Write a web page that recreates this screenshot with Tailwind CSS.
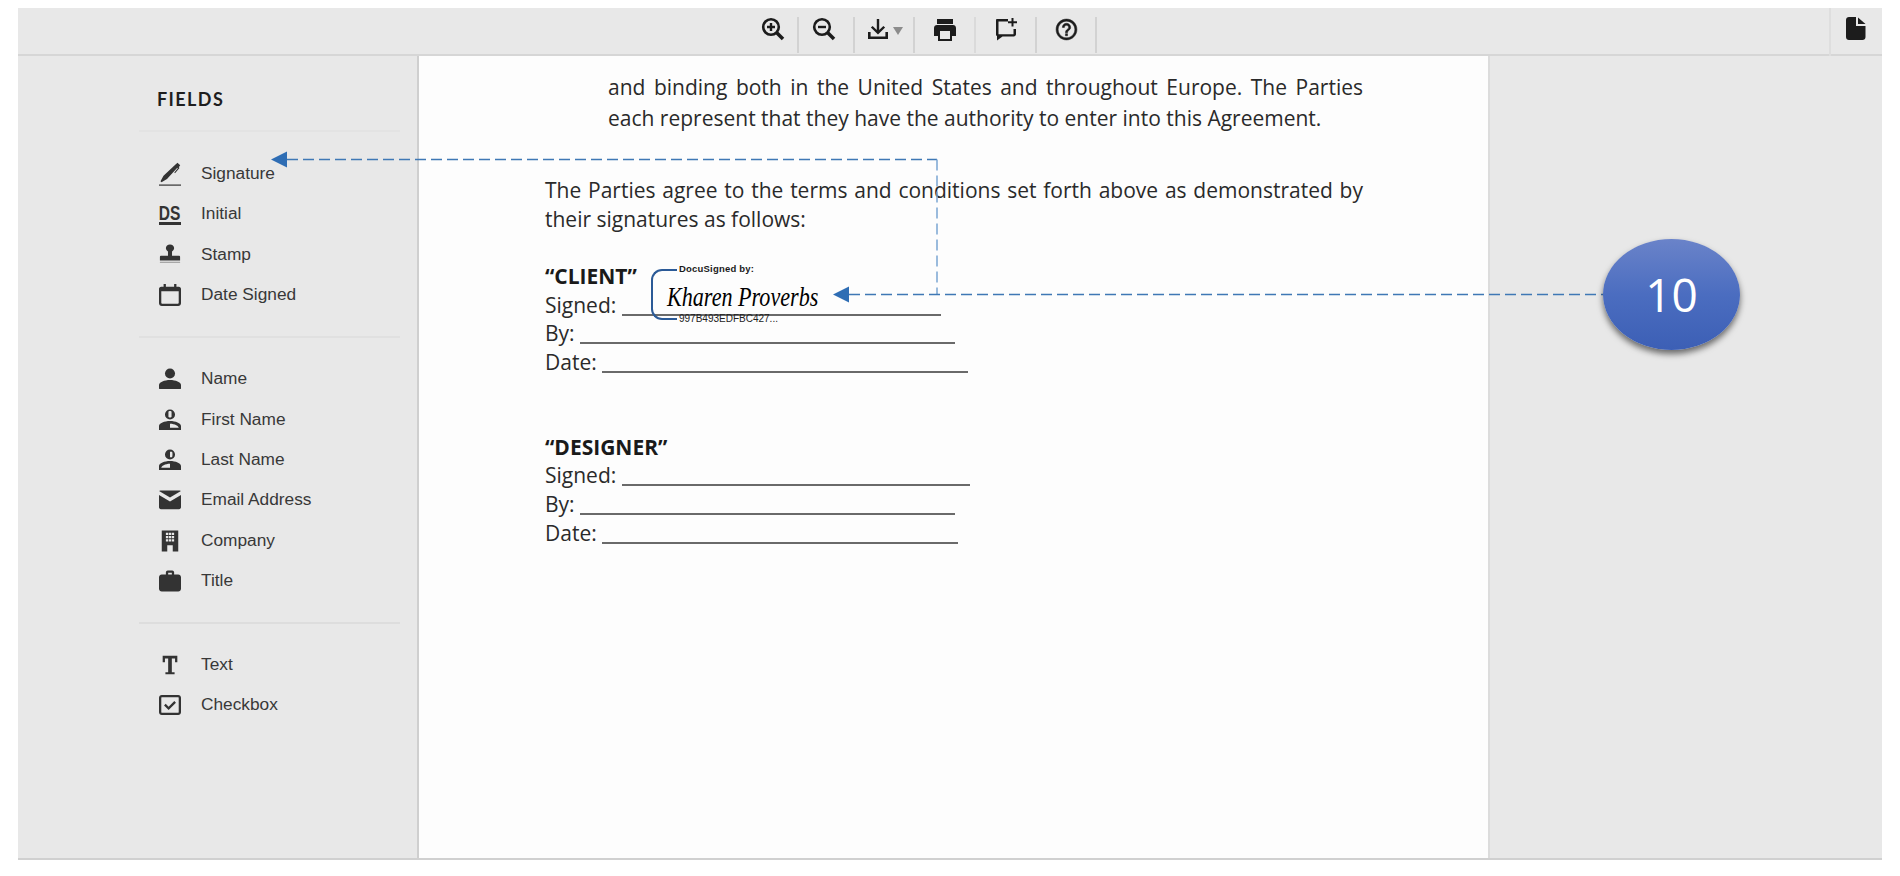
<!DOCTYPE html>
<html lang="en">
<head>
<meta charset="utf-8">
<title>Fields</title>
<script src="https://cdn.jsdelivr.net/npm/@tailwindcss/browser@4"></script>
</head>
<body class="bg-white w-[1900px] h-[876px] overflow-hidden relative font-['Liberation_Sans',sans-serif]">
<div class="mt-2 ml-[18px] w-[1864px] h-[852px] flex flex-col border-b-2 border-[#d0d0d0]">

  <!-- toolbar -->
  <div class="h-[48px] shrink-0 bg-[#e8e8e8] border-b-2 border-[#d6d6d6] flex text-[#1c1c1c] pl-[721px]">
    <div class="w-[60px] h-[36px] mt-[9px] border-r-2 border-[#d2d2d2] flex items-start justify-center pl-[10px]">
      <svg class="w-[24px] h-[24px]" viewBox="0 0 24 24" fill="none" stroke="currentColor"><circle cx="10" cy="10" r="7.800" stroke-width="2.600"/><path d="M15.500 15.500 22 22" stroke-width="3.600"/><path d="M10 6v8M6 10h8" stroke-width="2.400"/></svg>
    </div>
    <div class="w-[56px] h-[36px] mt-[9px] border-r-2 border-[#d2d2d2] flex items-start justify-center pr-[4px]">
      <svg class="w-[24px] h-[24px]" viewBox="0 0 24 24" fill="none" stroke="currentColor"><circle cx="10" cy="10" r="7.800" stroke-width="2.600"/><path d="M15.500 15.500 22 22" stroke-width="3.600"/><path d="M6 10h8" stroke-width="2.400"/></svg>
    </div>
    <div class="w-[60px] h-[36px] mt-[9px] border-r-2 border-[#d2d2d2] flex items-start pl-[11px] gap-[3px]">
      <svg class="w-[24px] h-[26px]" viewBox="0 0 24 26" fill="currentColor"><path d="M10.800 2h2.400v11l4.200-4.100 1.700 1.600-7.100 7-7.100-7 1.700-1.600 4.200 4.100z"/><path d="M2 15h2.600v4.500h14.800V15H22v7H2z"/></svg>
      <div class="mt-[10px] w-0 h-0 border-l-[5px] border-r-[5px] border-t-[8px] border-l-transparent border-r-transparent border-t-[#8c8c8c]"></div>
    </div>
    <div class="w-[61px] h-[36px] mt-[9px] border-r-2 border-[#dadada] flex items-start justify-center">
      <svg class="w-[24px] h-[26px]" viewBox="0 0 24 26" fill="currentColor"><path d="M4 2h16v5H4z"/><path fill-rule="evenodd" d="M4 8h16c1.700 0 3 1.300 3 3v8h-4v5H5v-5H1v-8c0-1.700 1.300-3 3-3zm3 6v8h10v-8z"/></svg>
    </div>
    <div class="w-[61px] h-[36px] mt-[9px] border-r-2 border-[#d2d2d2] flex items-start justify-center">
      <svg class="w-[24px] h-[24px]" viewBox="0 0 24 24" fill="currentColor"><path d="M3 2h11v2.400H4.500v12.800h15V12H22v5.200c0 1.200-1 2.200-2.200 2.200H8.500L3 23.500V19c-1-.3-1-.9-1-1.800V3.500C2 2.600 2.200 2 3 2z"/><path d="M17.500 1h2v3.200H23v2h-3.500v3.300h-2V6.200H14v-2h3.500z"/></svg>
    </div>
    <div class="w-[60px] h-[36px] mt-[9px] border-r-2 border-[#d2d2d2] flex items-start justify-center">
      <svg class="w-[25px] h-[25px]" viewBox="0 0 24 24" fill="currentColor" stroke="currentColor" stroke-width=".5"><path d="M11 18h2v-2h-2v2zm1-16C6.480 2 2 6.480 2 12s4.480 10 10 10 10-4.480 10-10S17.520 2 12 2zm0 18c-4.410 0-8-3.590-8-8s3.590-8 8-8 8 3.590 8 8-3.590 8-8 8zm0-14c-2.210 0-4 1.790-4 4h2c0-1.100.9-2 2-2s2 .9 2 2c0 2-3 1.750-3 5h2c0-2.250 3-2.500 3-5 0-2.210-1.790-4-4-4z"/></svg>
    </div>
    <div class="ml-auto w-[53px] h-[48px] -mb-[2px] border-l-2 border-[#dedede] flex items-start pl-[15px] pt-[9px]">
      <svg class="w-[20px] h-[23px]" viewBox="0 0 20 23" fill="#1c1c1c"><path d="M3 0h7v9h9.500v11c0 1.700-1.300 3-3 3H3c-1.700 0-3-1.300-3-3V3c0-1.700 1.300-3 3-3z"/><path d="M12 .5 19.500 7H12z"/></svg>
    </div>
  </div>

  <div class="flex-1 flex min-h-0">
    <!-- fields sidebar -->
    <aside class="w-[401px] shrink-0 bg-[#e8e8e8] border-r-2 border-[#cfcfcf] pl-[121px] pr-[17px] text-[#383838] text-[17.3px]">
      <div class="h-[76px] flex items-center pl-[18px] pt-[12px] border-b-2 border-[#e3e3e3] font-['Lato',sans-serif] font-bold text-[18px] tracking-[1.4px] text-[#1e1e1e]">FIELDS</div>

      <div class="pt-[21px] pb-[21px] border-b-2 border-[#e0e0e0]">
        <div class="h-[40.4px] flex items-center pl-[20px] pt-[1px] gap-[20px]">
          <svg class="w-[22px] h-[24px] shrink-0" viewBox="0 0 22 24" fill="#333"><path d="M16.500 2.500 18.500 .8l2.700 2.500-1.400 2 .7.700-4.500 5.200-.7-.6 3.500-4.300-.5-.5L8 17 2.500 20.300 1.500 19.300 4.500 13.800z"/><path d="M0 22.500h22v1.200H0z"/></svg>
          <span>Signature</span>
        </div>
        <div class="h-[40.4px] flex items-center pl-[20px] pt-[1px] gap-[20px]">
          <span class="w-[22px] shrink-0 border-b-[3px] border-[#333] text-center font-bold text-[#333] text-[21px] leading-[19px] overflow-visible"><span class="inline-block scale-x-[0.74] -mx-[4px]">DS</span></span>
          <span>Initial</span>
        </div>
        <div class="h-[40.4px] flex items-center pl-[20px] pt-[1px] gap-[20px]">
          <svg class="w-[22px] h-[24px] shrink-0" viewBox="0 0 24 24" fill="#333"><path d="M12 1.500c2.600 0 4.500 1.800 4.500 4 0 1.700-1 3-2.300 3.700V14H22c.6 0 1 .4 1 1v4H1v-4c0-.6.4-1 1-1h7.800V9.200C8.500 8.500 7.500 7.200 7.500 5.500c0-2.200 1.900-4 4.500-4z"/><path d="M1 20.500h22v1H1z" opacity=".5"/></svg>
          <span>Stamp</span>
        </div>
        <div class="h-[40.4px] flex items-center pl-[20px] pt-[1px] gap-[20px]">
          <svg class="w-[22px] h-[24px] shrink-0" viewBox="0 0 24 26" fill="#333"><path fill-rule="evenodd" d="M5 1h2.500v3h9V1H19v3h2.500C23 4 24 5 24 6.500V22c0 1.700-1.300 3-3 3H3c-1.700 0-3-1.300-3-3V6.500C0 5 1 4 2.500 4H5zM2.500 9v12.500c0 .6.400 1 1 1h17c.6 0 1-.4 1-1V9z"/></svg>
          <span>Date Signed</span>
        </div>
      </div>

      <div class="pt-[21px] pb-[21px] border-b-2 border-[#dddddd]">
        <div class="h-[40.4px] flex items-center pl-[20px] pt-[1px] gap-[20px]">
          <svg class="w-[22px] h-[22px] shrink-0" viewBox="0 0 24 24" fill="#333"><circle cx="12" cy="6" r="5.500"/><path d="M0 22v-3.500c0-3 6-5.500 12-5.500s12 2.500 12 5.500V22c0 .6-.4 1-1 1H1c-.6 0-1-.4-1-1z"/></svg>
          <span>Name</span>
        </div>
        <div class="h-[40.4px] flex items-center pl-[20px] pt-[1px] gap-[20px]">
          <svg class="w-[22px] h-[22px] shrink-0" viewBox="0 0 24 24" fill="#333"><path fill-rule="evenodd" d="M12 .500a5.500 5.500 0 1 1 0 11 5.500 5.500 0 0 1 0-11zM10.300 3v5.500c0 1 3.400 1 3.400 0V3c0-1-3.400-1-3.400 0z"/><path fill-rule="evenodd" d="M0 23v-4.500c0-3 6-5.500 12-5.500s12 2.500 12 5.500V23zm12-7v4.500h9.500c0-2-4-4.500-9.500-4.500z"/></svg>
          <span>First Name</span>
        </div>
        <div class="h-[40.4px] flex items-center pl-[20px] pt-[1px] gap-[20px]">
          <svg class="w-[22px] h-[22px] shrink-0" viewBox="0 0 24 24" fill="#333"><path fill-rule="evenodd" d="M12 .500a5.500 5.500 0 1 1 0 11 5.500 5.500 0 0 1 0-11zM12 3v6h2c1 0 1-6 0-6z"/><path fill-rule="evenodd" d="M0 23v-4.500c0-3 6-5.500 12-5.500s12 2.500 12 5.500V23zm12-7c-5.500 0-9.500 2.500-9.500 4.500H12z"/></svg>
          <span>Last Name</span>
        </div>
        <div class="h-[40.4px] flex items-center pl-[20px] pt-[1px] gap-[20px]">
          <svg class="w-[22px] h-[22px] shrink-0" viewBox="0 0 24 24" fill="#333"><path d="M1.500 1.500h21c.6 0 1.100.3 1.400.8L12 9.300.1 2.300c.3-.5.8-.8 1.400-.8z"/><path d="M0 6.500l12 7 12-7V20c0 1.100-.9 2-2 2H2c-1.100 0-2-.9-2-2z"/></svg>
          <span>Email Address</span>
        </div>
        <div class="h-[40.4px] flex items-center pl-[20px] pt-[1px] gap-[20px]">
          <svg class="w-[22px] h-[22px] shrink-0" viewBox="0 0 24 24" fill="#333"><path fill-rule="evenodd" d="M3 .500h18v23h-6v-7H9v7H3zM7.500 3v2.500H10V3zm3.200 0v2.500h2.600V3zM14 3v2.500h2.500V3zM7.500 6.500V9H10V6.500zm3.200 0V9h2.600V6.500zm3.300 0V9h2.500V6.500zM7.500 10v2.500H10V10zm3.200 0v2.500h2.600V10zm3.300 0v2.500h2.500V10z"/></svg>
          <span>Company</span>
        </div>
        <div class="h-[40.4px] flex items-center pl-[20px] pt-[1px] gap-[20px]">
          <svg class="w-[22px] h-[22px] shrink-0" viewBox="0 0 24 24" fill="#333"><path fill-rule="evenodd" d="M7.500 5V2.500C7.500 1.500 8.500.500 9.500.500h5c1 0 2 1 2 2V5H21c1.700 0 3 1.300 3 3v12.500c0 1.700-1.300 3-3 3H3c-1.700 0-3-1.300-3-3V8c0-1.700 1.300-3 3-3zM10 3v2h4V3z"/></svg>
          <span>Title</span>
        </div>
      </div>

      <div class="pt-[20px]">
        <div class="h-[40.4px] flex items-center pl-[20px] pt-[1px] gap-[20px]">
          <svg class="w-[22px] h-[22px] shrink-0" viewBox="0 0 24 24" fill="#333"><path d="M4 2h16v7h-2.500V5H14v15h3v2H7v-2h3V5H6.500v4H4z"/></svg>
          <span>Text</span>
        </div>
        <div class="h-[40px] flex items-center pl-[20px] pt-[1px] gap-[20px]">
          <svg class="w-[22px] h-[22px] shrink-0" viewBox="0 0 24 24" fill="#333"><path fill-rule="evenodd" d="M3 1h18c1.700 0 3 1.300 3 3v16c0 1.700-1.300 3-3 3H3c-1.700 0-3-1.300-3-3V4c0-1.700 1.300-3 3-3zm0 2.500c-.3 0-.5.200-.5.500v16c0 .3.200.5.500.5h18c.3 0 .5-.2.500-.5V4c0-.3-.2-.5-.5-.5z"/><path d="M10.500 17.500 5.500 12.500l1.800-1.800 3.200 3.200 6.200-6.200 1.800 1.800z"/></svg>
          <span>Checkbox</span>
        </div>
      </div>
    </aside>

    <!-- document page -->
    <main class="w-[1071px] shrink-0 bg-[#fdfdfd] border-r-2 border-[#dcdcdc] pl-[126px] pr-[125px] pt-[16px] font-['Open_Sans',sans-serif] text-[21px] text-[#2a2a2a]">
      <p class="ml-[63px] leading-[31px] text-justify">and binding both in the United States and throughout Europe. The Parties each represent that they have the authority to enter into this Agreement.</p>
      <p class="mt-[42px] leading-[29px] text-justify">The Parties agree to the terms and conditions set forth above as demonstrated by their signatures as follows:</p>

      <div class="mt-[28px] leading-[28.7px]">
        <p class="font-bold text-[#1a1a1a]">“CLIENT”</p>
        <p class="h-[28.7px]">Signed: <span class="inline-block w-[319px] h-[18px] align-[-3px] border-b-2 border-[#6a6a6a]"></span></p>
        <p class="h-[28.7px]">By: <span class="inline-block w-[375px] h-[18px] align-[-3px] border-b-2 border-[#6a6a6a]"></span></p>
        <p class="h-[28.7px]">Date: <span class="inline-block w-[366px] h-[18px] align-[-3px] border-b-2 border-[#6a6a6a]"></span></p>
      </div>

      <div class="mt-[56px] leading-[28.7px]">
        <p class="font-bold text-[#1a1a1a]">“DESIGNER”</p>
        <p class="h-[28.7px]">Signed: <span class="inline-block w-[348px] h-[18px] align-[-3px] border-b-2 border-[#6a6a6a]"></span></p>
        <p class="h-[28.7px]">By: <span class="inline-block w-[375px] h-[18px] align-[-3px] border-b-2 border-[#6a6a6a]"></span></p>
        <p class="h-[28.7px]">Date: <span class="inline-block w-[356px] h-[18px] align-[-3px] border-b-2 border-[#6a6a6a]"></span></p>
      </div>
    </main>

    <div class="flex-1 bg-[#e8e8e8]"></div>
  </div>
</div>

<!-- DocuSign stamp over the signed line -->
<div class="absolute left-[651px] top-[269px] w-[26px] h-[51px] border-l-2 border-t-2 border-b-2 border-[#2b5a97] rounded-l-[11px]"></div>
<span class="absolute left-[679px] top-[263px] text-[9.5px] leading-[12px] font-bold text-[#1a1a1a] tracking-[0.2px]">DocuSigned by:</span>
<span class="absolute left-[667px] top-[281px] text-[28px] leading-[32px] italic text-black font-['Liberation_Serif',serif] whitespace-nowrap origin-left scale-x-[0.79]">Kharen Proverbs</span>
<span class="absolute left-[679px] top-[313px] text-[10px] leading-[12px] text-[#222]">997B493EDFBC427...</span>

<!-- callout arrows -->
<svg class="absolute left-0 top-0 w-[1900px] h-[876px] pointer-events-none" viewBox="0 0 1900 876" fill="none">
  <path d="M287 159.500H937" stroke="#3f78b5" stroke-width="1.500" stroke-dasharray="11 5"/>
  <path d="M937 159.500V294" stroke="#7aa5d2" stroke-width="1.500" stroke-dasharray="11 5"/>
  <path d="M849 294.500H1604" stroke="#3f78b5" stroke-width="1.500" stroke-dasharray="11 5"/>
  <path d="M271 159.500 287 151.500V167.500Z" fill="#2e6db4"/>
  <path d="M833 294.500 849 286.500V302.500Z" fill="#2e6db4"/>
</svg>

<!-- step badge -->
<div class="absolute left-[1603px] top-[239px] w-[137px] h-[111px] rounded-[50%] bg-gradient-to-b from-[#6a83c9] via-[#4b6dc0] to-[#3c5fb5] shadow-[0_4px_6px_rgba(0,0,0,0.55)] flex items-center justify-center font-['Open_Sans',sans-serif] text-[46px] text-white">10</div>
</body>
</html>
